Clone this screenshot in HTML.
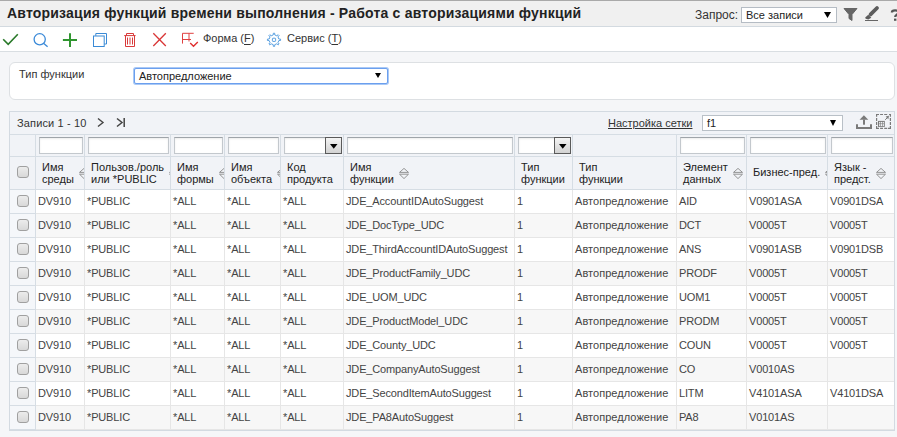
<!DOCTYPE html><html><head><meta charset="utf-8"><style>
*{box-sizing:border-box;margin:0;padding:0}
html,body{width:897px;height:437px;overflow:hidden;background:#f5f6f8;font-family:"Liberation Sans",sans-serif;color:#333}
div,span{position:absolute}
.t{white-space:nowrap}
#hdr{left:0;top:0;width:897px;height:27px;background:#f0f0f0;border-top:1px solid #a9a9a9;border-bottom:1px solid #d3dae0}
#title{left:7px;top:4px;font-size:14px;font-weight:bold;color:#222;letter-spacing:0.2px}
#tb{left:0;top:27px;width:897px;height:25px;background:#fff;border-bottom:1px solid #d9dee2}
.tbt{font-size:11px;color:#333}
#fp{left:9px;top:62px;width:886px;height:38px;background:#fff;border:1px solid #dde0e3;border-radius:6px}
#grid{left:9px;top:111px;width:886px;height:320px;border:1px solid #d3dae1;background:#f1f3f7}
.vl{width:1px;background:#d6dde4}
.hl{height:1px;background:#d6dde4}
.dvl{width:1px;background:#e6e6e6}
.dhl{height:1px;background:#e6e6e6}
.fi{height:17px;background:#fff;border:1px solid #c3c8cd;border-top-color:#9fa4a9;box-shadow:inset 0 1px 2px rgba(0,0,0,0.08)}
.hd{font-size:11px;color:#222;line-height:12px}
.cell{font-size:11px;color:#444;letter-spacing:-0.15px}
.cyr{letter-spacing:0.05px}
.cb{width:12px;height:12px;border:1px solid #a0a0a0;border-radius:3px;background:linear-gradient(#ececec,#d8d8d8)}
.sel{background:#fff;border:1px solid #b9c0c7}
.arr{font-size:10px;color:#000}
</style></head><body>
<div id="hdr"><span id="title" class="t">Авторизация функций времени выполнения - Работа с авторизациями функций</span></div>
<span class="t" style="left:695px;top:8px;font-size:12px;color:#333">Запрос:</span>
<div class="sel" style="left:741px;top:7px;width:96px;height:16px;border-color:#b5bcc4"></div>
<span class="t" style="left:746px;top:9px;font-size:11px;color:#222">Все записи</span>
<svg style="position:absolute;left:824px;top:12px" width="7" height="6"><path d="M0 0H7L3.5 6Z" fill="#000"/></svg>
<svg style="position:absolute;left:843px;top:7px" width="15" height="15" viewBox="0 0 15 15"><path d="M1 1.5H14L9 7.5V13.5L6 11.5V7.5Z" fill="#666" stroke="#666" stroke-width="1" stroke-linejoin="round"/></svg>
<svg style="position:absolute;left:860px;top:4px" width="22" height="20" viewBox="860 4 22 20"><path d="M877 8L870.6 14.4" stroke="#5c5c5c" stroke-width="3.8" stroke-linecap="round"/><path d="M868.3 14.7L871.3 17.7L868.3 19.6L865.7 18.8L865.2 17.5Z" fill="#5c5c5c"/><path d="M865 20.5H878" stroke="#666" stroke-width="1"/></svg>
<svg style="position:absolute;left:888px;top:6px" width="9" height="16" viewBox="888 6 9 16"><path d="M891.9 12.4C891.9 9.8 898.4 9.4 898.4 12.6C898.4 14.6 895.2 14.7 895.2 17" fill="none" stroke="#555" stroke-width="2.3"/><rect x="894" y="18.6" width="2.4" height="2.2" fill="#555"/></svg>
<div id="tb"></div>
<svg style="position:absolute;left:0;top:27px" width="360" height="24" viewBox="0 27 360 24"><path d="M3.2 39.2L8.2 44.4L17.8 34.3" fill="none" stroke="#2a7a2a" stroke-width="1.6"/><circle cx="39.7" cy="39.3" r="5.6" fill="none" stroke="#3b8ad8" stroke-width="1.3"/><path d="M43.8 43.4L47.6 46.8" stroke="#3b8ad8" stroke-width="1.3"/><path d="M62.9 39.9H77M70 33.2V47" stroke="#2f952f" stroke-width="2"/><path d="M95.8 35.8V33.5H106.5V44H104.3" fill="none" stroke="#3a8ad6" stroke-width="1"/><rect x="93.5" y="36" width="10.7" height="10.5" fill="none" stroke="#3a8ad6" stroke-width="1"/><path d="M124.2 35.6H135.6M126.5 35.6V33.5H133.5V35.6M125.5 35.6V46.5H134.5V35.6M127.5 37.5V44.5M130 37.5V44.5M132.5 37.5V44.5" fill="none" stroke="#d93a3a" stroke-width="1"/><path d="M153.3 33.2L165.8 46M165.8 33.2L153.3 46" stroke="#d93636" stroke-width="1.3"/><path d="M182.5 43.6V33.3H193.7M182.5 39.5H191M189 33.3V41.5" fill="none" stroke="#e04040" stroke-width="1"/><path d="M190.2 43L193.5 46.2L197.8 42" fill="none" stroke="#e03030" stroke-width="1.4"/><g fill="none" stroke="#4a96dc" stroke-width="0.9" stroke-linejoin="round"><path d="M278.84 39.03L280.57 39.13L280.57 40.47L278.84 40.57L277.96 42.68L279.12 43.97L278.17 44.92L276.88 43.76L274.77 44.64L274.67 46.37L273.33 46.37L273.23 44.64L271.12 43.76L269.83 44.92L268.88 43.97L270.04 42.68L269.16 40.57L267.43 40.47L267.43 39.13L269.16 39.03L270.04 36.92L268.88 35.63L269.83 34.68L271.12 35.84L273.23 34.96L273.33 33.23L274.67 33.23L274.77 34.96L276.88 35.84L278.17 34.68L279.12 35.63L277.96 36.92Z"/><rect x="272.4" y="38.2" width="3.2" height="3.2" rx="0.6"/></g></svg>
<span class="t tbt" style="left:203px;top:32px">Форма (<u style="text-underline-offset:2px">F</u>)</span>
<span class="t tbt" style="left:287px;top:32px">Сервис (<u style="text-underline-offset:2px">T</u>)</span>
<div id="fp"></div>
<span class="t" style="left:19px;top:68px;font-size:11px;color:#333">Тип функции</span>
<div style="left:134px;top:68px;width:254px;height:16px;background:#fff;border:1px solid #6b9fee;border-radius:2px;box-shadow:0 0 0 1px #a9c9f6"></div>
<span class="t" style="left:139px;top:70px;font-size:11px;color:#222">Автопредложение</span>
<svg style="position:absolute;left:375px;top:73px" width="6" height="5"><path d="M0 0H6L3 5Z" fill="#000"/></svg>
<div id="grid"></div>
<div class="hl" style="left:10px;top:134px;width:884px"></div>
<span class="t" style="left:17px;top:117px;font-size:11px;color:#333;letter-spacing:0.15px">Записи 1 - 10</span>
<svg style="position:absolute;left:96px;top:117px" width="32" height="11" viewBox="0 0 32 11"><path d="M2 1.5L7 5.5L2 9.5" fill="none" stroke="#444" stroke-width="1.4"/><path d="M21 1.5L26 5.5L21 9.5M28.2 1V10" fill="none" stroke="#444" stroke-width="1.5"/></svg>
<span class="t" style="left:608px;top:117px;font-size:11px;color:#333;text-decoration:underline">Настройка сетки</span>
<div class="sel" style="left:702px;top:115px;width:141px;height:16px"></div>
<span class="t" style="left:707px;top:117px;font-size:11px;color:#222">f1</span>
<svg style="position:absolute;left:830px;top:120px" width="7" height="6"><path d="M0 0H6L3 6Z" fill="#000"/></svg>
<svg style="position:absolute;left:852px;top:112px" width="42" height="20" viewBox="852 112 42 20"><g fill="#7a7a7a"><path d="M863.9 115.2L859.6 119.8H868.3Z"/><rect x="863" y="119.5" width="2" height="5.2"/><path d="M856 124.2H858V126.9H870V124.2H872V129H856Z"/><path d="M876 113.9H879V115.1H877.2V116.8H876ZM880.1 113.9H883V115.1H880.1ZM884.2 113.9H887.2V115.1H884.2ZM889 113.9H891V116.8H889.8V115.1H889Z"/><path d="M876 118.1H877.2V121H876ZM876 122H877.2V125H876ZM876 126H877.2V127.7H879V128.9H876Z"/><path d="M889.8 118.1H891V121H889.8ZM889.8 122H891V125H889.8ZM889.8 126H891V128.9H888V127.7H889.8Z"/><path d="M880.1 127.7H883V128.9H880.1ZM884.2 127.7H887.2V128.9H884.2Z"/><path d="M878 120.9H884.8V126.9H878Z"/><path d="M889 115.8L885.6 116.5L888.3 119.2Z"/></g><path d="M885.2 119.8L887.5 117.5" stroke="#7a7a7a" stroke-width="1"/><g fill="#f1f3f7"><rect x="879.1" y="121.9" width="1.2" height="1.6"/><rect x="880.9" y="121.9" width="1.2" height="1.6"/><rect x="882.7" y="121.9" width="1.2" height="1.6"/><rect x="879.1" y="124.1" width="1.2" height="2"/><rect x="880.9" y="124.1" width="1.2" height="2"/><rect x="882.7" y="124.1" width="1.2" height="2"/></g></svg>
<div class="hl" style="left:10px;top:156px;width:884px"></div>
<div class="hl" style="left:10px;top:189px;width:884px"></div>
<div class="vl" style="left:35px;top:135px;height:54px"></div>
<div class="vl" style="left:84px;top:135px;height:54px"></div>
<div class="vl" style="left:170px;top:135px;height:54px"></div>
<div class="vl" style="left:224px;top:135px;height:54px"></div>
<div class="vl" style="left:280px;top:135px;height:54px"></div>
<div class="vl" style="left:343px;top:135px;height:54px"></div>
<div class="vl" style="left:514px;top:135px;height:54px"></div>
<div class="vl" style="left:572px;top:135px;height:54px"></div>
<div class="vl" style="left:676px;top:135px;height:54px"></div>
<div class="vl" style="left:746px;top:135px;height:54px"></div>
<div class="vl" style="left:827px;top:135px;height:54px"></div>
<div class="fi" style="left:39px;top:137px;width:44px"></div>
<div class="fi" style="left:88px;top:137px;width:81px"></div>
<div class="fi" style="left:174px;top:137px;width:49px"></div>
<div class="fi" style="left:228px;top:137px;width:51px"></div>
<div class="fi" style="left:284px;top:137px;width:58px"></div>
<div style="left:325px;top:137px;width:17px;height:17px;background:linear-gradient(#f4f4f4,#d2d2d2);border:1px solid #5a5a5a"></div>
<svg style="position:absolute;left:330px;top:143.5px" width="8" height="5"><path d="M0 0H7.5L3.75 4.8Z" fill="#000"/></svg>
<div class="fi" style="left:347px;top:137px;width:166px"></div>
<div class="fi" style="left:518px;top:137px;width:53px"></div>
<div style="left:554px;top:137px;width:17px;height:17px;background:linear-gradient(#f4f4f4,#d2d2d2);border:1px solid #5a5a5a"></div>
<svg style="position:absolute;left:559px;top:143.5px" width="8" height="5"><path d="M0 0H7.5L3.75 4.8Z" fill="#000"/></svg>
<div class="fi" style="left:680px;top:137px;width:65px"></div>
<div class="fi" style="left:750px;top:137px;width:76px"></div>
<div class="fi" style="left:831px;top:137px;width:62px"></div>
<div style="left:36px;top:157px;width:48px;height:32px;overflow:hidden"><div style="left:6px;top:0;height:32px;display:flex;align-items:center"><span class="t hd" style="position:static;">Имя<br>среды</span><svg width="10" height="12" viewBox="0 0 10 12" style="margin-left:5px;flex:none;align-self:flex-start;margin-top:10px"><path d="M0.5 5.4L5 1.4L9.5 5.4ZM0.5 7.2L5 11.6L9.5 7.2Z" fill="none" stroke="#8a8a8a" stroke-width="0.9"/></svg></div></div>
<div style="left:85px;top:157px;width:85px;height:32px;overflow:hidden"><div style="left:6px;top:0;height:32px;display:flex;align-items:center"><span class="t hd" style="position:static;">Пользов./роль<br>или *PUBLIC</span><svg width="10" height="12" viewBox="0 0 10 12" style="margin-left:5px;flex:none;align-self:flex-start;margin-top:10px"><path d="M0.5 5.4L5 1.4L9.5 5.4ZM0.5 7.2L5 11.6L9.5 7.2Z" fill="none" stroke="#8a8a8a" stroke-width="0.9"/></svg></div></div>
<div style="left:171px;top:157px;width:53px;height:32px;overflow:hidden"><div style="left:6px;top:0;height:32px;display:flex;align-items:center"><span class="t hd" style="position:static;">Имя<br>формы</span><svg width="10" height="12" viewBox="0 0 10 12" style="margin-left:5px;flex:none;align-self:flex-start;margin-top:10px"><path d="M0.5 5.4L5 1.4L9.5 5.4ZM0.5 7.2L5 11.6L9.5 7.2Z" fill="none" stroke="#8a8a8a" stroke-width="0.9"/></svg></div></div>
<div style="left:225px;top:157px;width:55px;height:32px;overflow:hidden"><div style="left:6px;top:0;height:32px;display:flex;align-items:center"><span class="t hd" style="position:static;">Имя<br>объекта</span><svg width="10" height="12" viewBox="0 0 10 12" style="margin-left:5px;flex:none;align-self:flex-start;margin-top:10px"><path d="M0.5 5.4L5 1.4L9.5 5.4ZM0.5 7.2L5 11.6L9.5 7.2Z" fill="none" stroke="#8a8a8a" stroke-width="0.9"/></svg></div></div>
<div style="left:281px;top:157px;width:62px;height:32px;overflow:hidden"><div style="left:6px;top:0;height:32px;display:flex;align-items:center"><span class="t hd" style="position:static;">Код<br>продукта</span></div></div>
<div style="left:344px;top:157px;width:170px;height:32px;overflow:hidden"><div style="left:6px;top:0;height:32px;display:flex;align-items:center"><span class="t hd" style="position:static;">Имя<br>функции</span><svg width="10" height="12" viewBox="0 0 10 12" style="margin-left:5px;flex:none;align-self:flex-start;margin-top:10px"><path d="M0.5 5.4L5 1.4L9.5 5.4ZM0.5 7.2L5 11.6L9.5 7.2Z" fill="none" stroke="#8a8a8a" stroke-width="0.9"/></svg></div></div>
<div style="left:515px;top:157px;width:57px;height:32px;overflow:hidden"><div style="left:6px;top:0;height:32px;display:flex;align-items:center"><span class="t hd" style="position:static;">Тип<br>функции</span></div></div>
<div style="left:573px;top:157px;width:103px;height:32px;overflow:hidden"><div style="left:6px;top:0;height:32px;display:flex;align-items:center"><span class="t hd" style="position:static;">Тип<br>функции</span></div></div>
<div style="left:677px;top:157px;width:69px;height:32px;overflow:hidden"><div style="left:6px;top:0;height:32px;display:flex;align-items:center"><span class="t hd" style="position:static;">Элемент<br>данных</span><svg width="10" height="12" viewBox="0 0 10 12" style="margin-left:5px;flex:none;align-self:flex-start;margin-top:10px"><path d="M0.5 5.4L5 1.4L9.5 5.4ZM0.5 7.2L5 11.6L9.5 7.2Z" fill="none" stroke="#8a8a8a" stroke-width="0.9"/></svg></div></div>
<div style="left:747px;top:157px;width:80px;height:32px;overflow:hidden"><div style="left:6px;top:0;height:32px;display:flex;align-items:center"><span class="t hd" style="position:static;margin-top:-2px">Бизнес-пред.</span><svg width="10" height="12" viewBox="0 0 10 12" style="margin-left:5px;flex:none;align-self:flex-start;margin-top:10px"><path d="M0.5 5.4L5 1.4L9.5 5.4ZM0.5 7.2L5 11.6L9.5 7.2Z" fill="none" stroke="#8a8a8a" stroke-width="0.9"/></svg></div></div>
<div style="left:828px;top:157px;width:66px;height:32px;overflow:hidden"><div style="left:6px;top:0;height:32px;display:flex;align-items:center"><span class="t hd" style="position:static;">Язык -<br>предст.</span><svg width="10" height="12" viewBox="0 0 10 12" style="margin-left:5px;flex:none;align-self:flex-start;margin-top:10px"><path d="M0.5 5.4L5 1.4L9.5 5.4ZM0.5 7.2L5 11.6L9.5 7.2Z" fill="none" stroke="#8a8a8a" stroke-width="0.9"/></svg></div></div>
<span class="cb" style="left:17px;top:166px"></span>
<div style="left:36px;top:190px;width:858px;height:23px;background:#fff"></div>
<div style="left:10px;top:190px;width:25px;height:23px;background:#f5f7fa"></div>
<div class="hl" style="left:10px;top:213px;width:26px"></div>
<div class="dhl" style="left:36px;top:213px;width:858px"></div>
<span class="cb" style="left:17px;top:195px"></span>
<span class="t cell" style="left:38px;top:195px">DV910</span>
<span class="t cell" style="left:87px;top:195px">*PUBLIC</span>
<span class="t cell" style="left:173px;top:195px">*ALL</span>
<span class="t cell" style="left:227px;top:195px">*ALL</span>
<span class="t cell" style="left:283px;top:195px">*ALL</span>
<span class="t cell" style="left:346px;top:195px">JDE_AccountIDAutoSuggest</span>
<span class="t cell" style="left:517px;top:195px">1</span>
<span class="t cell cyr" style="left:575px;top:195px">Автопредложение</span>
<span class="t cell" style="left:679px;top:195px">AID</span>
<span class="t cell" style="left:749px;top:195px">V0901ASA</span>
<span class="t cell" style="left:830px;top:195px">V0901DSA</span>
<div style="left:36px;top:214px;width:858px;height:23px;background:#f7f7f7"></div>
<div style="left:10px;top:214px;width:25px;height:23px;background:#f5f7fa"></div>
<div class="hl" style="left:10px;top:237px;width:26px"></div>
<div class="dhl" style="left:36px;top:237px;width:858px"></div>
<span class="cb" style="left:17px;top:219px"></span>
<span class="t cell" style="left:38px;top:219px">DV910</span>
<span class="t cell" style="left:87px;top:219px">*PUBLIC</span>
<span class="t cell" style="left:173px;top:219px">*ALL</span>
<span class="t cell" style="left:227px;top:219px">*ALL</span>
<span class="t cell" style="left:283px;top:219px">*ALL</span>
<span class="t cell" style="left:346px;top:219px">JDE_DocType_UDC</span>
<span class="t cell" style="left:517px;top:219px">1</span>
<span class="t cell cyr" style="left:575px;top:219px">Автопредложение</span>
<span class="t cell" style="left:679px;top:219px">DCT</span>
<span class="t cell" style="left:749px;top:219px">V0005T</span>
<span class="t cell" style="left:830px;top:219px">V0005T</span>
<div style="left:36px;top:238px;width:858px;height:23px;background:#fff"></div>
<div style="left:10px;top:238px;width:25px;height:23px;background:#f5f7fa"></div>
<div class="hl" style="left:10px;top:261px;width:26px"></div>
<div class="dhl" style="left:36px;top:261px;width:858px"></div>
<span class="cb" style="left:17px;top:243px"></span>
<span class="t cell" style="left:38px;top:243px">DV910</span>
<span class="t cell" style="left:87px;top:243px">*PUBLIC</span>
<span class="t cell" style="left:173px;top:243px">*ALL</span>
<span class="t cell" style="left:227px;top:243px">*ALL</span>
<span class="t cell" style="left:283px;top:243px">*ALL</span>
<span class="t cell" style="left:346px;top:243px">JDE_ThirdAccountIDAutoSuggest</span>
<span class="t cell" style="left:517px;top:243px">1</span>
<span class="t cell cyr" style="left:575px;top:243px">Автопредложение</span>
<span class="t cell" style="left:679px;top:243px">ANS</span>
<span class="t cell" style="left:749px;top:243px">V0901ASB</span>
<span class="t cell" style="left:830px;top:243px">V0901DSB</span>
<div style="left:36px;top:262px;width:858px;height:23px;background:#f7f7f7"></div>
<div style="left:10px;top:262px;width:25px;height:23px;background:#f5f7fa"></div>
<div class="hl" style="left:10px;top:285px;width:26px"></div>
<div class="dhl" style="left:36px;top:285px;width:858px"></div>
<span class="cb" style="left:17px;top:267px"></span>
<span class="t cell" style="left:38px;top:267px">DV910</span>
<span class="t cell" style="left:87px;top:267px">*PUBLIC</span>
<span class="t cell" style="left:173px;top:267px">*ALL</span>
<span class="t cell" style="left:227px;top:267px">*ALL</span>
<span class="t cell" style="left:283px;top:267px">*ALL</span>
<span class="t cell" style="left:346px;top:267px">JDE_ProductFamily_UDC</span>
<span class="t cell" style="left:517px;top:267px">1</span>
<span class="t cell cyr" style="left:575px;top:267px">Автопредложение</span>
<span class="t cell" style="left:679px;top:267px">PRODF</span>
<span class="t cell" style="left:749px;top:267px">V0005T</span>
<span class="t cell" style="left:830px;top:267px">V0005T</span>
<div style="left:36px;top:286px;width:858px;height:23px;background:#fff"></div>
<div style="left:10px;top:286px;width:25px;height:23px;background:#f5f7fa"></div>
<div class="hl" style="left:10px;top:309px;width:26px"></div>
<div class="dhl" style="left:36px;top:309px;width:858px"></div>
<span class="cb" style="left:17px;top:291px"></span>
<span class="t cell" style="left:38px;top:291px">DV910</span>
<span class="t cell" style="left:87px;top:291px">*PUBLIC</span>
<span class="t cell" style="left:173px;top:291px">*ALL</span>
<span class="t cell" style="left:227px;top:291px">*ALL</span>
<span class="t cell" style="left:283px;top:291px">*ALL</span>
<span class="t cell" style="left:346px;top:291px">JDE_UOM_UDC</span>
<span class="t cell" style="left:517px;top:291px">1</span>
<span class="t cell cyr" style="left:575px;top:291px">Автопредложение</span>
<span class="t cell" style="left:679px;top:291px">UOM1</span>
<span class="t cell" style="left:749px;top:291px">V0005T</span>
<span class="t cell" style="left:830px;top:291px">V0005T</span>
<div style="left:36px;top:310px;width:858px;height:23px;background:#f7f7f7"></div>
<div style="left:10px;top:310px;width:25px;height:23px;background:#f5f7fa"></div>
<div class="hl" style="left:10px;top:333px;width:26px"></div>
<div class="dhl" style="left:36px;top:333px;width:858px"></div>
<span class="cb" style="left:17px;top:315px"></span>
<span class="t cell" style="left:38px;top:315px">DV910</span>
<span class="t cell" style="left:87px;top:315px">*PUBLIC</span>
<span class="t cell" style="left:173px;top:315px">*ALL</span>
<span class="t cell" style="left:227px;top:315px">*ALL</span>
<span class="t cell" style="left:283px;top:315px">*ALL</span>
<span class="t cell" style="left:346px;top:315px">JDE_ProductModel_UDC</span>
<span class="t cell" style="left:517px;top:315px">1</span>
<span class="t cell cyr" style="left:575px;top:315px">Автопредложение</span>
<span class="t cell" style="left:679px;top:315px">PRODM</span>
<span class="t cell" style="left:749px;top:315px">V0005T</span>
<span class="t cell" style="left:830px;top:315px">V0005T</span>
<div style="left:36px;top:334px;width:858px;height:23px;background:#fff"></div>
<div style="left:10px;top:334px;width:25px;height:23px;background:#f5f7fa"></div>
<div class="hl" style="left:10px;top:357px;width:26px"></div>
<div class="dhl" style="left:36px;top:357px;width:858px"></div>
<span class="cb" style="left:17px;top:339px"></span>
<span class="t cell" style="left:38px;top:339px">DV910</span>
<span class="t cell" style="left:87px;top:339px">*PUBLIC</span>
<span class="t cell" style="left:173px;top:339px">*ALL</span>
<span class="t cell" style="left:227px;top:339px">*ALL</span>
<span class="t cell" style="left:283px;top:339px">*ALL</span>
<span class="t cell" style="left:346px;top:339px">JDE_County_UDC</span>
<span class="t cell" style="left:517px;top:339px">1</span>
<span class="t cell cyr" style="left:575px;top:339px">Автопредложение</span>
<span class="t cell" style="left:679px;top:339px">COUN</span>
<span class="t cell" style="left:749px;top:339px">V0005T</span>
<span class="t cell" style="left:830px;top:339px">V0005T</span>
<div style="left:36px;top:358px;width:858px;height:23px;background:#f7f7f7"></div>
<div style="left:10px;top:358px;width:25px;height:23px;background:#f5f7fa"></div>
<div class="hl" style="left:10px;top:381px;width:26px"></div>
<div class="dhl" style="left:36px;top:381px;width:858px"></div>
<span class="cb" style="left:17px;top:363px"></span>
<span class="t cell" style="left:38px;top:363px">DV910</span>
<span class="t cell" style="left:87px;top:363px">*PUBLIC</span>
<span class="t cell" style="left:173px;top:363px">*ALL</span>
<span class="t cell" style="left:227px;top:363px">*ALL</span>
<span class="t cell" style="left:283px;top:363px">*ALL</span>
<span class="t cell" style="left:346px;top:363px">JDE_CompanyAutoSuggest</span>
<span class="t cell" style="left:517px;top:363px">1</span>
<span class="t cell cyr" style="left:575px;top:363px">Автопредложение</span>
<span class="t cell" style="left:679px;top:363px">CO</span>
<span class="t cell" style="left:749px;top:363px">V0010AS</span>
<span class="t cell" style="left:830px;top:363px"></span>
<div style="left:36px;top:382px;width:858px;height:23px;background:#fff"></div>
<div style="left:10px;top:382px;width:25px;height:23px;background:#f5f7fa"></div>
<div class="hl" style="left:10px;top:405px;width:26px"></div>
<div class="dhl" style="left:36px;top:405px;width:858px"></div>
<span class="cb" style="left:17px;top:387px"></span>
<span class="t cell" style="left:38px;top:387px">DV910</span>
<span class="t cell" style="left:87px;top:387px">*PUBLIC</span>
<span class="t cell" style="left:173px;top:387px">*ALL</span>
<span class="t cell" style="left:227px;top:387px">*ALL</span>
<span class="t cell" style="left:283px;top:387px">*ALL</span>
<span class="t cell" style="left:346px;top:387px">JDE_SecondItemAutoSuggest</span>
<span class="t cell" style="left:517px;top:387px">1</span>
<span class="t cell cyr" style="left:575px;top:387px">Автопредложение</span>
<span class="t cell" style="left:679px;top:387px">LITM</span>
<span class="t cell" style="left:749px;top:387px">V4101ASA</span>
<span class="t cell" style="left:830px;top:387px">V4101DSA</span>
<div style="left:36px;top:406px;width:858px;height:23px;background:#f7f7f7"></div>
<div style="left:10px;top:406px;width:25px;height:23px;background:#f5f7fa"></div>
<div class="hl" style="left:10px;top:429px;width:26px"></div>
<div class="dhl" style="left:36px;top:429px;width:858px"></div>
<span class="cb" style="left:17px;top:411px"></span>
<span class="t cell" style="left:38px;top:411px">DV910</span>
<span class="t cell" style="left:87px;top:411px">*PUBLIC</span>
<span class="t cell" style="left:173px;top:411px">*ALL</span>
<span class="t cell" style="left:227px;top:411px">*ALL</span>
<span class="t cell" style="left:283px;top:411px">*ALL</span>
<span class="t cell" style="left:346px;top:411px">JDE_PA8AutoSuggest</span>
<span class="t cell" style="left:517px;top:411px">1</span>
<span class="t cell cyr" style="left:575px;top:411px">Автопредложение</span>
<span class="t cell" style="left:679px;top:411px">PA8</span>
<span class="t cell" style="left:749px;top:411px">V0101AS</span>
<span class="t cell" style="left:830px;top:411px"></span>
<div class="dvl" style="left:84px;top:190px;height:240px"></div>
<div class="dvl" style="left:170px;top:190px;height:240px"></div>
<div class="dvl" style="left:224px;top:190px;height:240px"></div>
<div class="dvl" style="left:280px;top:190px;height:240px"></div>
<div class="dvl" style="left:343px;top:190px;height:240px"></div>
<div class="dvl" style="left:514px;top:190px;height:240px"></div>
<div class="dvl" style="left:572px;top:190px;height:240px"></div>
<div class="dvl" style="left:676px;top:190px;height:240px"></div>
<div class="dvl" style="left:746px;top:190px;height:240px"></div>
<div class="dvl" style="left:827px;top:190px;height:240px"></div>
<div class="vl" style="left:35px;top:190px;height:240px"></div>
</body></html>
